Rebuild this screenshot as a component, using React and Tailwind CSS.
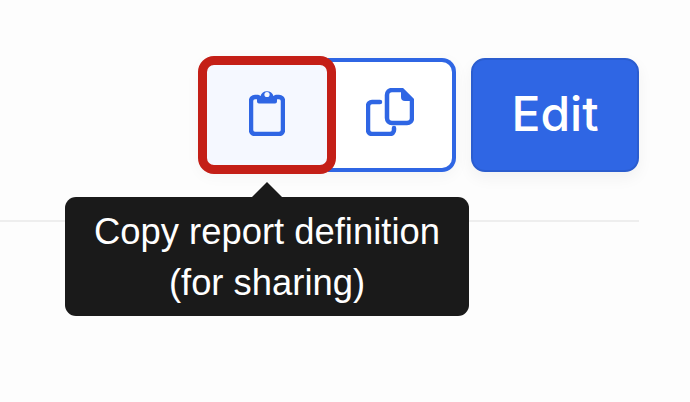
function ClipboardIcon() {
  return (
    <svg width="36" height="48" viewBox="0 0 36 48" fill="none" className="block">
      <path d="M9 9H6a4 4 0 0 0-4 4v29a4 4 0 0 0 4 4h24a4 4 0 0 0 4-4V13a4 4 0 0 0-4-4h-3" stroke="#2f66e4" strokeWidth="4.500" strokeLinecap="round" />
      <path d="M8 8h3.500a6.800 6.800 0 0 1 13 0H28v5.500a2 2 0 0 1-2 2H10a2 2 0 0 1-2-2z" fill="#2f66e4" />
      <circle cx="18" cy="6.500" r="2.600" fill="#f5f8ff" />
    </svg>
  )
}

function CopyIcon() {
  return (
    <svg width="48" height="48" viewBox="0 0 48 48" fill="none" className="block">
      <path d="M14 14H6a4 4 0 0 0-4 4v24a4 4 0 0 0 4 4h18a4 4 0 0 0 4-4v-2" stroke="#2f66e4" strokeWidth="4.500" strokeLinecap="round" />
      <path d="M36 2H26a5 5 0 0 0-5 5v23a5 5 0 0 0 5 5h15a5 5 0 0 0 5-5V12z" stroke="#2f66e4" strokeWidth="4.500" strokeLinejoin="round" />
      <path d="M35 1l12 12h-8a4 4 0 0 1-4-4z" fill="#2f66e4" />
    </svg>
  )
}

export default function App() {
  return (
    <div className="relative h-[402px] w-[690px] overflow-hidden bg-[#fdfdfd] font-['Inter',sans-serif]">
      <div className="flex items-center justify-end pt-[58px] pr-[51px]">
        <div className="relative flex h-[114px] w-[257px] rounded-[14px] bg-white shadow-[0_4px_16px_rgba(0,0,0,0.04)]">
          <button className="flex w-[129px] items-center justify-center rounded-l-[14px] bg-[#f5f8ff] pb-[6px] pl-[7px]">
            <ClipboardIcon />
          </button>
          <button className="flex flex-1 items-center justify-center rounded-r-[14px] border-[4px] border-l-0 border-[#2f66e4] pb-[6px]">
            <CopyIcon />
          </button>
          <div className="absolute top-[-2px] left-[-1px] h-[118px] w-[138px] rounded-[16px] border-[9px] border-[#c41f17]" />
        </div>
        <button className="ml-[15px] h-[114px] w-[168px] rounded-[14px] border-2 border-[#2b5dcf] bg-[#2f66e4] pb-[3px] text-[48px] font-medium text-white shadow-[0_6px_16px_rgba(0,0,0,0.05)]">
          Edit
        </button>
      </div>
      <div className="mt-[48px] mr-[51px] h-[2px] bg-[#eeeeee]" />
      <div className="absolute top-[197px] left-[65px] h-[119px] w-[404px] rounded-[11px] bg-[#1a1a1a] pt-[9px] text-center font-['Liberation_Sans',sans-serif] text-[36.400px] leading-[51px] text-white">
        <div className="absolute top-[-15px] left-[187px] size-0 border-x-[15px] border-b-[15px] border-x-transparent border-b-[#1a1a1a]" />
        Copy report definition
        <br />
        (for sharing)
      </div>
    </div>
  )
}
